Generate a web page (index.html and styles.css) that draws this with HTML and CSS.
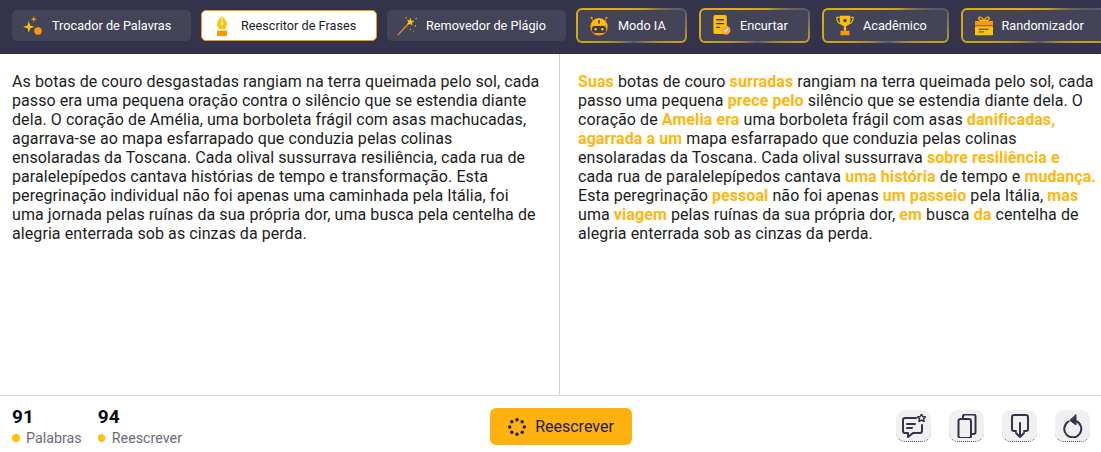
FILE: index.html
```html
<!DOCTYPE html>
<html lang="pt">
<head>
<meta charset="utf-8">
<title>Reescritor de Frases</title>
<link rel="stylesheet" href="styles.css">
</head>
<body>
<div class="app">
  <nav class="topbar">
    <a class="tab w179 first">
      <svg class="ico" viewBox="0 0 24 24"><path fill="#ffc107" d="M7 6l1.600 5.400L14 13l-5.400 1.600L7 20l-1.600-5.400L0 13l5.400-1.600z"/><path fill="#ff9800" d="M13 0l.9 3.100L17 4l-3.100.9L13 8l-.9-3.100L9 4l3.100-.9z"/><circle cx="18" cy="18" r="4.500" fill="#ff9800"/></svg>
      <span>Trocador de Palavras</span>
    </a>
    <a class="tab active w177">
      <svg class="pen" viewBox="0 0 14 24"><path fill="#ffc107" d="M7 0c3 3 6 6.500 6 9.500 0 2-1.300 4-2.500 6h-7C2.300 13.500 1 11.500 1 9.500 1 6.500 4 3 7 0z"/><circle cx="7" cy="9.500" r="1.600" fill="#fff"/><rect x="6.500" y="1" width="1" height="7" fill="#fff"/><rect x="1" y="17.500" width="12" height="6.500" rx="1" fill="#ff9800"/></svg>
      <span>Reescritor de Frases</span>
    </a>
    <a class="tab w179 third">
      <svg class="ico" viewBox="0 0 24 24"><path stroke="#e8912d" stroke-width="1.500" d="M1 23L14 9"/><path fill="#ffc107" d="M16 2l1.200 3.300L21 6l-3 2 .5 3.500L15.500 9.500 12 10.500l1.500-3.200L12 4.500l3 .5z"/><g fill="#ffc107"><circle cx="11" cy="2" r=".8"/><circle cx="23" cy="3" r=".8"/><circle cx="22" cy="12" r=".8"/><circle cx="16" cy="16" r=".8"/><circle cx="20" cy="18" r=".6"/></g></svg>
      <span>Removedor de Plágio</span>
    </a>
    <a class="tab gold w111 robot-tab">
      <svg class="ico" viewBox="0 0 24 24"><circle cx="3" cy="2" r="1.200" fill="#ff9800"/><circle cx="21" cy="2" r="1.200" fill="#ff9800"/><path stroke="#ff9800" d="M3 2l2 4M21 2l-2 4"/><circle cx="12" cy="13" r="10.500" fill="#ff9f0a"/><path fill="#ffc107" d="M3 11a9 8 0 0 1 18 0z"/><rect x="3.500" y="12" width="17" height="8.500" rx="4" fill="#3d3a50"/><circle cx="8" cy="16" r="1.500" fill="#ffc107"/><circle cx="16" cy="16" r="1.500" fill="#ffc107"/><rect x="11" y="5" width="2" height="4" fill="#3d3a50"/></svg>
      <span>Modo IA</span>
    </a>
    <a class="tab gold w111 doc-tab">
      <svg class="ico-sm" viewBox="0 0 18 22"><rect x="0" y="0" width="14" height="20" rx="2" fill="#ffc107"/><path stroke="#3d3a50" stroke-width="1.400" d="M3 5h8M3 9h8M3 13h4"/><circle cx="13" cy="16" r="4.800" fill="#ff9f40"/><path stroke="#fff" stroke-width="1.200" fill="none" d="M11 16l1.500 1.500 2.500-3"/></svg>
      <span>Encurtar</span>
    </a>
    <a class="tab gold w127 cup-tab">
      <svg class="ico-sm" viewBox="0 0 24 26"><path fill="none" stroke="#ffc107" stroke-width="1.500" d="M5 2H1c0 5 2 8 6 9M19 2h4c0 5-2 8-6 9"/><path fill="#ffc107" d="M5 0h14v6c0 5-3 8-7 8s-7-3-7-8z"/><path fill="#3d3a50" d="M12 3l1 2.200 2.300.2-1.800 1.500.6 2.300L12 8l-2.100 1.200.6-2.300-1.800-1.500 2.300-.2z"/><rect x="10.500" y="14" width="3" height="6" fill="#ffc107"/><rect x="6" y="20" width="12" height="6" fill="#ff9800"/></svg>
      <span>Acadêmico</span>
    </a>
    <a class="tab gold last">
      <svg class="ico-sm" viewBox="0 0 24 26"><path fill="none" stroke="#ffc107" stroke-width="1.600" d="M12 6C10 2 5 0 5 3.500s4 2.500 7 2.500c3 0 7 1 7-2.500S14 2 12 6z"/><rect x="0" y="7" width="24" height="6" fill="#ff9800"/><rect x="0" y="14" width="24" height="12" rx="1" fill="#ffc107"/><path stroke="#3d3a50" stroke-width="1.300" d="M5 18h13M5 21.500h7"/></svg>
      <span>Randomizador</span>
    </a>
  </nav>

  <main class="panes">
    <section class="pane left">
      <p>As botas de couro desgastadas rangiam na terra queimada pelo sol, cada passo era uma pequena oração contra o silêncio que se estendia diante dela. O coração de Amélia, uma borboleta frágil com asas machucadas, agarrava-se ao mapa esfarrapado que conduzia pelas colinas ensolaradas da Toscana. Cada olival sussurrava resiliência, cada rua de paralelepípedos cantava histórias de tempo e transformação. Esta peregrinação individual não foi apenas uma caminhada pela Itália, foi uma jornada pelas ruínas da sua própria dor, uma busca pela centelha de alegria enterrada sob as cinzas da perda.</p>
    </section>
    <section class="pane right">
      <p><b>Suas</b> botas de couro <b>surradas</b> rangiam na terra queimada pelo sol, cada passo uma pequena <b>prece pelo</b> silêncio que se estendia diante dela. O coração de <b>Amelia era</b> uma borboleta frágil com asas <b>danificadas, agarrada a um</b> mapa esfarrapado que conduzia pelas colinas ensolaradas da Toscana. Cada olival sussurrava <b>sobre resiliência e</b> cada rua de paralelepípedos cantava <b>uma história</b> de tempo e <b>mudança.</b> Esta peregrinação <b>pessoal</b> não foi apenas <b>um passeio</b> pela Itália, <b>mas</b> uma <b>viagem</b> pelas ruínas da sua própria dor, <b>em</b> busca <b>da</b> centelha de alegria enterrada sob as cinzas da perda.</p>
    </section>
  </main>

  <footer class="footer">
    <div class="stats">
      <div class="stat">
        <strong>91</strong>
        <span class="label"><i class="dot"></i>Palabras</span>
      </div>
      <div class="stat">
        <strong>94</strong>
        <span class="label"><i class="dot"></i>Reescrever</span>
      </div>
    </div>
    <button class="rewrite">
      <svg class="spin" viewBox="0 0 18 18"><g fill="#1a1a1a"><circle cx="9" cy="1.700" r="1.700"/><circle cx="14.200" cy="3.800" r="1.700"/><circle cx="16.300" cy="9" r="1.700"/><circle cx="14.200" cy="14.200" r="1.700"/><circle cx="9" cy="16.300" r="1.700"/><circle cx="3.800" cy="14.200" r="1.700"/><circle cx="1.700" cy="9" r="1.700"/><circle cx="3.800" cy="3.800" r="1.700"/></g></svg>
      <span>Reescrever</span>
    </button>
    <div class="actions">
      <span class="action"><svg viewBox="0 0 24 24"><path d="M14 4H3a2 2 0 0 0-2 2v11a2 2 0 0 0 2 2h3v4l5-4h7a2 2 0 0 0 2-2v-6M5 10h8M5 14h5"/><path class="thinstar" d="M19.500 0l1.200 2.500 2.800.4-2 1.900.5 2.700-2.500-1.300L17 7.500l.5-2.700-2-1.900 2.800-.4z"/></svg></span>
      <span class="action"><svg viewBox="0 0 24 24"><rect x="3.500" y="5" width="12.500" height="19" rx="2"/><path d="M8 5V2.500a2 2 0 0 1 2-2h8.500a2 2 0 0 1 2 2V18a2 2 0 0 1-2 2H16"/></svg></span>
      <span class="action"><svg viewBox="0 0 24 24"><path d="M8 17H6a2 2 0 0 1-2-2V3a2 2 0 0 1 2-2h12a2 2 0 0 1 2 2v12a2 2 0 0 1-2 2h-2M12 9v14M8 19l4 4 4-4"/></svg></span>
      <span class="action"><svg viewBox="0 0 24 24"><path d="M15 7A8.500 8.500 0 1 1 7.500 7.500"/><path class="solid" d="M15 1v10l-6-4.500z"/></svg></span>
    </div>
  </footer>
</div>
</body>
</html>
```
FILE: styles.css
```css
* { box-sizing: border-box; }
html, body { margin: 0; height: 100%; overflow: hidden; }
body { font-family: Roboto, "Liberation Sans", sans-serif; background: #fff; color: #111; }
.app { height: 452px; display: flex; flex-direction: column; }

.topbar {
  height: 54px; flex: none; background: #33334b;
  display: flex; align-items: center; padding: 0 0 3px 12px; gap: 10px;
  overflow: hidden;
}
.tab {
  height: 31px; flex: none; border-radius: 5px; background: #444459;
  display: flex; align-items: center; gap: 9px;
  color: #fff; font-size: 12.7px; font-weight: 400; white-space: nowrap;
}
.first { padding-left: 11px; }
.third { padding-left: 10px; }
.w179 { width: 179px; }
.w177 { width: 176px; }
.w111 { width: 111px; }
.w127 { width: 127px; }
.last { width: 150px; }
.ico { width: 20px; height: 20px; flex: none; }
.ico-sm { width: 18px; height: 21px; flex: none; }
.pen { width: 12px; height: 20px; flex: none; }
.tab.active { background: #fff; color: #1a1a2a; border: 1px solid #f39a12; gap: 13px; padding-left: 14px; }
.tab.gold {
  height: 35px; border: 2px solid transparent; border-radius: 6px;
  background:
    linear-gradient(#444459, #444459) padding-box,
    conic-gradient(#d8a80f 0deg, #c6a01e 40deg, #5a566a 73deg, #c6a01e 107deg, #5a566a 170deg, #d0a414 253deg, #e0b010 300deg, #d8a80f 360deg) border-box;
}
.tab.gold + .tab.gold { margin-left: 2px; }
.robot-tab { padding-left: 11px; }
.doc-tab { padding-left: 12px; }
.cup-tab { padding-left: 12px; }
.last { padding-left: 11.500px; }

.panes { flex: 1; display: flex; min-height: 0; }
.pane { flex: none; padding: 18px 12px 0; }
.pane p { margin: 0; font-size: 16px; line-height: 19px; color: #1c1c1c; letter-spacing: 0.08px; }
.left { width: 560px; border-right: 1px solid #d3d3d3; padding-right: 18px; }
.right { width: 541px; padding-left: 18px; padding-right: 4px; }
.right b { color: #ffb60d; font-weight: 700; }

.footer {
  height: 57px; flex: none; border-top: 1px solid #d8d8d8;
  display: flex; align-items: center; padding: 5px 11px 0 12px;
}
.stats { display: flex; gap: 16px; width: 478px; }
.stat { display: flex; flex-direction: column; }
.stat strong { font-size: 19px; line-height: 23px; font-weight: 700; color: #0a0a14; }
.label { font-size: 14.300px; line-height: 20px; color: #6a6a80; display: flex; align-items: center; }
.dot { width: 7.500px; height: 7.500px; border-radius: 50%; background: #ffc107; margin-right: 6.500px; }
.rewrite {
  width: 142px; height: 37px; border: 0; border-radius: 6px; background: #ffb10f;
  display: flex; align-items: center; justify-content: center; gap: 9px;
  font: 400 16px Roboto, sans-serif; color: #1c1c1c; padding: 0;
}
.spin { width: 18px; height: 18px; }
.actions { margin-left: auto; margin-top: -1px; display: flex; gap: 18px; }
.action {
  width: 35px; height: 32px; border-radius: 9px; background: #f0f0f0;
  border-bottom: 1px dotted #444;
  display: flex; align-items: center; justify-content: center;
}
.action svg { width: 24px; height: 24px; fill: none; stroke: #33334b; stroke-width: 2; stroke-linecap: round; stroke-linejoin: round; }
.action .thinstar { stroke-width: 1.500; }
.action .solid { fill: #33334b; stroke-width: 1; }
```
